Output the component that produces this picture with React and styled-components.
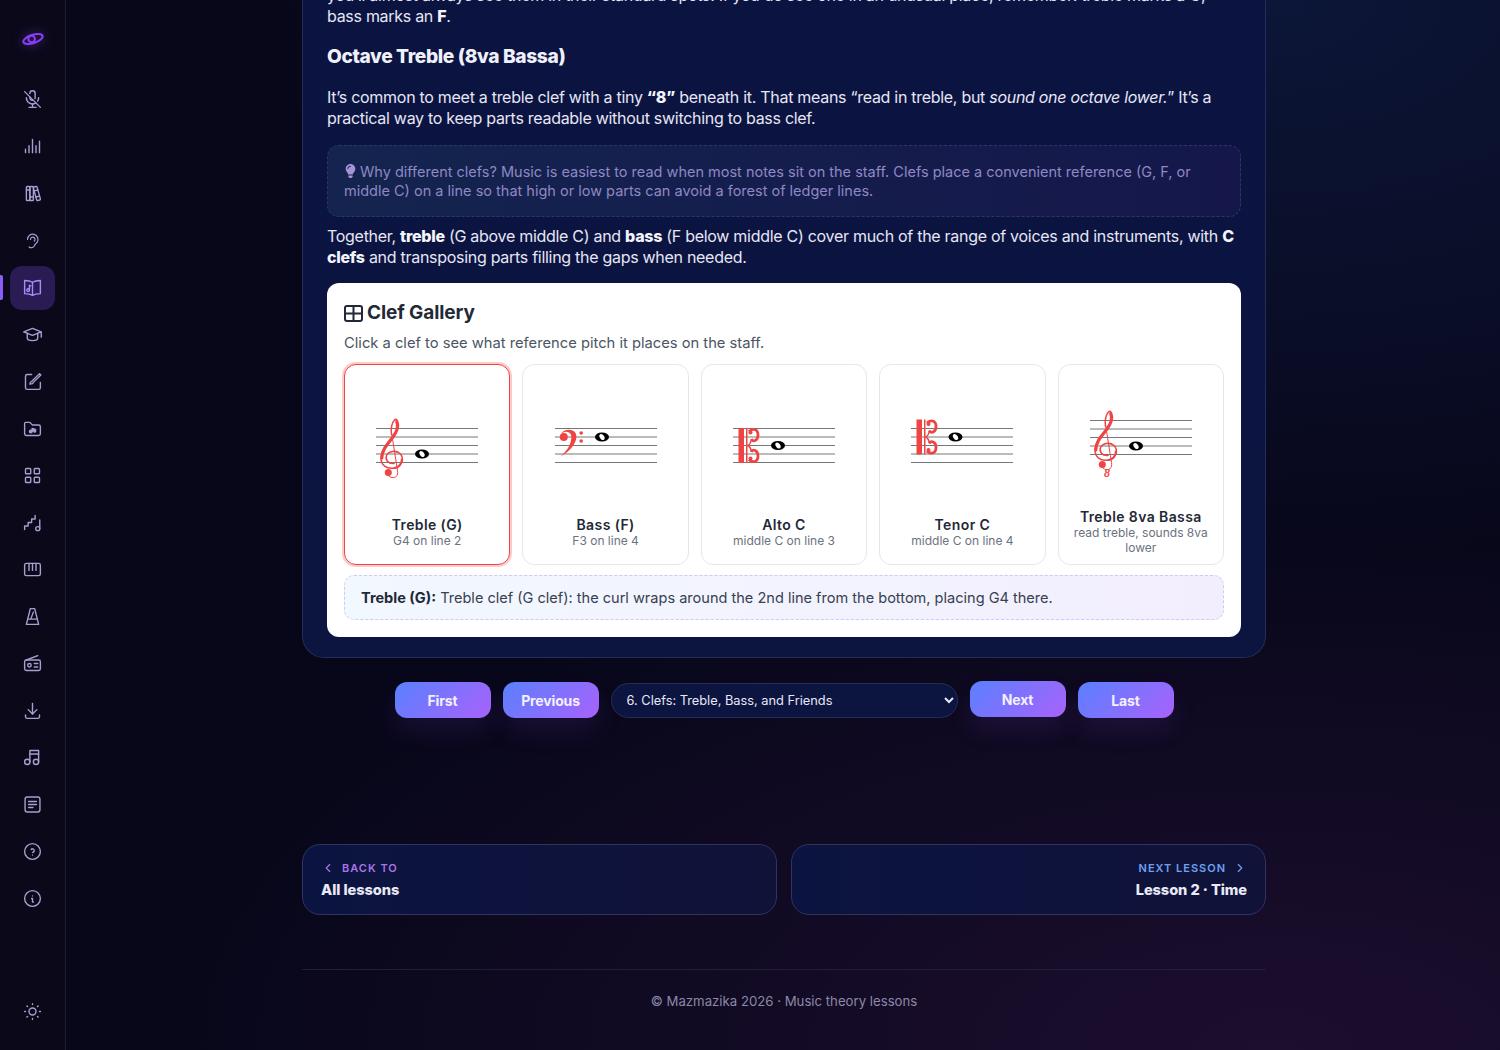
import React from 'react'
import styled, {createGlobalStyle} from 'styled-components'
import {FaLightbulb} from 'react-icons/fa'
import {
   TbMicrophoneOff, TbBooks, TbEar, TbSchool, TbLayoutGrid, TbDownload,
   TbMusic, TbHelpCircle, TbInfoCircle, TbSun, TbChevronLeft, TbChevronRight
} from 'react-icons/tb'

const GlobalStyle = createGlobalStyle`
* {box-sizing:border-box;}
html, body {margin:0; height:100%; overflow:hidden;}
body {
   font-family:Inter, "Liberation Sans", sans-serif;
   background:
      radial-gradient(ellipse 1100px 520px at 85% 100%, #1c0e2e 0%, transparent 100%),
      radial-gradient(ellipse 1000px 560px at 85% 0%, #0c1638 0%, transparent 100%),
      #08071a;
   color:#e8e8f4;
}
`

const Shell = styled.div`
display:flex; height:1050px; overflow:hidden;
`
const Sidebar = styled.nav`
width:66px; flex:none; height:100%;
display:flex; flex-direction:column; align-items:center;
padding:16px 0 13px;
background:#0a0819;
border-right:1px solid #1c1a38;
`
const Logo = styled.div`
width:44px; height:46px; margin-bottom:16px; color:#8b3cf6;
display:flex; align-items:center; justify-content:center;
filter:drop-shadow(0 0 6px rgba(139,92,246,.5));
`
const Item = styled.a`
position:relative;
width:45px; height:44px; margin-bottom:3px; flex:none;
display:flex; align-items:center; justify-content:center;
border-radius:12px;
color:${p => p.$active ? '#a78bfa' : '#a79fd0'};
background:${p => p.$active ? '#2a1c52' : 'transparent'};
${p => p.$active && `
&::before{content:''; position:absolute; left:-10px; top:9px; width:3px; height:25px; background:#8b5cf6; border-radius:0 2px 2px 0;}
`}
svg{width:${p => p.$small ? 18 : 21}px; height:${p => p.$small ? 18 : 21}px; stroke-width:1.6; margin:0 1px 1px 0;}
`
const Spring = styled.div`flex:1;`
const Main = styled.main`
flex:1; min-width:0; overflow:hidden; padding-left:2px;
display:flex; flex-direction:column; align-items:center;
`
const Column = styled.div`
width:964px; margin-top:-15px;
`
const Panel = styled.section`
background:linear-gradient(180deg,#0b1440 0%,#0c1440 100%);
border:1px solid #262c58;
border-top:none;
border-radius:0 0 22px 22px;
padding:0 24px 20px;
`
const Para = styled.p`
margin:0 0 ${p => p.$tight ? 15 : 16}px; font-size:16px; line-height:21px; letter-spacing:-.018em; color:#e6e6f5;
b{font-weight:800; color:#f4f4fb;}
`
const Heading = styled.h3`
margin:0 0 18px; font-size:19.2px; line-height:26px; font-weight:800; letter-spacing:-.02em; color:#f0f0fb;
`
const Note = styled.aside`
margin:0 0 9px; padding:16px 16px 15px;
height:72px;
border:1px dashed #2d3566;
border-radius:12px;
background:linear-gradient(90deg,#14244f,#15174a);
color:#8f88c4; font-size:14.5px; line-height:19px;
svg{width:13px; height:14px; vertical-align:-1px; margin-right:3px; color:#a594d8;}
`
const Gallery = styled.div`
background:#fff; border-radius:12px; padding:17px; color:#1f2937;
`
const GalleryTitle = styled.h4`
margin:0 0 7px; display:flex; align-items:center; gap:4px;
font-size:19px; line-height:26px; font-weight:700; letter-spacing:-.005em; color:#1f2937;
`
const GalleryHint = styled.div`
font-size:14.72px; line-height:20px; color:#4b5563; margin-bottom:11px;
`
const Cards = styled.div`
display:grid; grid-template-columns:repeat(5,1fr); gap:12px;
`
const Card = styled.button`
height:201px; padding:12px; border-radius:12px; background:#fff;
font:inherit; color:inherit;
display:flex; flex-direction:column; align-items:center; justify-content:center;
border:1px solid ${p => p.$active ? '#ef4444' : '#e5e7eb'};
box-shadow:${p => p.$active ? '0 0 0 2px #fecaca' : 'none'};
svg{flex:none; display:block;}
`
const CardName = styled.div`
font-size:14px; line-height:17px; font-weight:600; color:#1f2937; letter-spacing:.028em;
`
const CardSub = styled.div`
font-size:12px; line-height:15px; color:#6b7280; text-align:center;
`
const Result = styled.div`
margin-top:10px; padding:12px 16px; height:45px;
border:1px dashed #cfcaf5; border-radius:10px;
background:linear-gradient(90deg,#f2f8ff,#f3eefe);
font-size:14.55px; line-height:20px; color:#374151;
b{color:#1f2937; font-weight:700;}
`
const NavBar = styled.div`
margin-top:24px; display:flex; justify-content:center; align-items:center; gap:12px;
`
const NavButton = styled.button`
width:96px; height:36px; border:none; border-radius:12px;
font:700 14px Inter, sans-serif; color:#f3f0ff; letter-spacing:-.01em;
background:linear-gradient(135deg,#5a80ff,#a862fb);
box-shadow:0 14px 24px rgba(130,70,220,.12);
${p => p.$hover && 'transform:translateY(-1px);'}
`
const LessonSelect = styled.select`
width:347px; height:35px; padding:0 8px 0 11px; border-radius:18px;
background:#0c1440; border:1px solid #262c58; color:#e8e8f6;
font:400 12.8px Inter, sans-serif;
`
const Pager = styled.div`
margin-top:126px; display:grid; grid-template-columns:1fr 1fr; gap:14px;
`
const PagerCard = styled.a`
height:71px; padding:15px 18px; border-radius:18px;
background:linear-gradient(90deg,#0b1440,#101238);
border:1px solid #2f3460;
display:flex; flex-direction:column; gap:5px;
align-items:${p => p.$right ? 'flex-end' : 'flex-start'};
`
const PagerLabel = styled.div`
display:flex; align-items:center; gap:7px;
font-size:11px; line-height:16px; font-weight:600; letter-spacing:.09em;
color:${p => p.$right ? '#6ea0f0' : '#a974e6'};
svg{width:14px; height:14px;}
`
const PagerTitle = styled.div`
font-size:14.6px; line-height:19px; font-weight:800; letter-spacing:-.005em; color:#e8e8f6;
`
const Footer = styled.footer`
margin-top:54px; padding-top:21px; border-top:1px solid #211d3c;
text-align:center; font-size:13.2px; line-height:20px; color:#8c88a8;
`

const icon = {fill:'none', stroke:'currentColor', strokeLinecap:'round', strokeLinejoin:'round', viewBox:'0 0 24 24'}

const IconBars = () => <svg {...icon}><path d="M4 19v-4M8 19v-8M12 19V4M16 19v-8M20 19V6"/></svg>
const IconBookMusic = () => (
   <svg {...icon}><path d="M12 6c-2-1.300-5-2-9-2v15c4 0 7 .7 9 2 2-1.300 5-2 9-2V4c-4 0-7 .7-9 2zM12 6v15"/><circle cx="7" cy="15" r="1.500"/><path d="M8.500 15V9.500l1.500.5"/></svg>
)
const IconBrushEdit = () => (
   <svg {...icon}><path d="M11 4H6a2 2 0 0 0-2 2v13a2 2 0 0 0 2 2h13a2 2 0 0 0 2-2v-6"/><path d="M9 15c0-2 1-3 2.500-3.500L20 3l1.500 1.500L13 13c-.5 1.500-2 2-4 2z"/></svg>
)
const IconFolderMusic = () => (
   <svg {...icon}><path d="M4 5h5l3 3h7a2 2 0 0 1 2 2v8a2 2 0 0 1-2 2H5a2 2 0 0 1-2-2V6a1 1 0 0 1 1-1z"/><circle cx="10" cy="15.500" r="1.500" fill="currentColor"/><path d="M11.500 15.500V12l4 1v2" fill="currentColor"/><circle cx="14.500" cy="15" r="1" fill="currentColor"/></svg>
)
const IconSteps = () => (
   <svg {...icon}><path d="M3 20v-4h4v-4h4V8h4V4"/><circle cx="18" cy="19" r="2.300"/><path d="M20.300 19V9"/></svg>
)
const IconKeys = () => (
   <svg {...icon}><rect x="3" y="5" width="18" height="14" rx="2"/><path d="M8 5v8M12 5v8M16 5v8"/></svg>
)
const IconMetronome = () => (
   <svg {...icon}><path d="M9.500 3h5L19 21H5zM6.500 15h11M10 15l3-8"/></svg>
)
const IconRadio = () => (
   <svg {...icon}><rect x="3" y="8" width="18" height="12" rx="2"/><path d="M5 8l13-5M14 12h4M14 16h4"/><circle cx="8.500" cy="14" r="2"/></svg>
)
const IconArticle = () => (
   <svg {...icon}><rect x="3.500" y="3.500" width="17" height="17" rx="2.500"/><path d="M7.500 8.500h9M7.500 12h9M7.500 15.500h5"/></svg>
)

const Staff = ({noteX, noteY, children}) => (
   <svg width="140" height="134" viewBox="0 -2.500 140 134">
      {[44, 52.5, 61, 69.5, 78].map(y => <line key={y} x1="19" x2="121" y1={y} y2={y} stroke="#777" strokeWidth="1"/>)}
      {children}
      <g transform={`translate(${noteX} ${noteY})`}>
         <ellipse rx="7" ry="4.600" fill="#000"/>
         <ellipse rx="2.200" ry="3.300" fill="#fff" transform="rotate(-35)"/>
      </g>
   </svg>
)

const TrebleClef = () => (
   <g fill="none" stroke="#ef4444" strokeLinecap="round">
      <path strokeWidth="1.500" d="M37 79C31 79.500 28 75 29.500 71 31.500 66.500 39 65.500 43 69 47.500 73.500 45.500 82 37.500 83.500 30 85 24 81 24 73.500 24 65 31 59 36 52.500 40 47 42 41 40 36 39.500 34.500 38.500 34.500 37.500 35.500 35 38 33.500 44 34.500 50"/>
      <path strokeWidth="3.200" d="M24.800 73.500C24.800 65 31 59 36 52.500 40 47 41.500 41 39.800 37"/>
      <path strokeWidth="2" d="M44.800 75C45 80 41 83 37.500 83.500"/>
      <path strokeWidth="1" d="M34.500 48L40.500 86C41.500 92 38 93.500 35 93 33 92.700 31 91.500 30.500 89.500"/>
      <circle cx="31.300" cy="87.900" r="3.500" fill="#ef4444" stroke="none"/>
   </g>
)
const BassClef = () => (
   <g fill="#ef4444">
      <circle cx="27.800" cy="52.500" r="4"/>
      <path d="M24.500 50C27 44.800 36 43 39.500 48.500 43 55 36 66 24.500 72 33 65 35.800 57 35.300 51.500 34.800 46.500 28 45.500 24.500 50Z"/>
      <circle cx="45.200" cy="48.500" r="1.800"/>
      <circle cx="45.200" cy="56.500" r="1.800"/>
   </g>
)
const CClef = ({cy}) => (
   <g transform={`translate(0 ${cy})`} fill="none" stroke="#ef4444">
      <rect x="24.500" y="-17.500" width="5.500" height="35" fill="#ef4444" stroke="none"/>
      <rect x="32" y="-17.500" width="1.500" height="35" fill="#ef4444" stroke="none"/>
      <path strokeWidth="2.800" d="M35-14C38-17.500 44-17 44-10.500 44-4.500 38.500-3 37.500-6.500"/>
      <path strokeWidth="2.800" d="M35 14C38 17.500 44 17 44 10.500 44 4.500 38.500 3 37.500 6.500"/>
      <path strokeWidth="1.500" d="M33.500 0C36.500-1 37-3.500 37.500-6.500M33.500 0C36.500 1 37 3.500 37.500 6.500"/>
      <circle cx="36.500" cy="-13" r="2" fill="#ef4444" stroke="none"/>
      <circle cx="36.500" cy="13" r="2" fill="#ef4444" stroke="none"/>
   </g>
)

const clefs = [
   {name:'Treble (G)', sub:'G4 on line 2', x:65, y:69.5, draw:<TrebleClef/>, active:true},
   {name:'Bass (F)', sub:'F3 on line 4', x:66, y:52.5, draw:<BassClef/>},
   {name:'Alto C', sub:'middle C on line 3', x:64, y:61, draw:<CClef cy={61}/>},
   {name:'Tenor C', sub:'middle C on line 4', x:63.5, y:52.5, draw:<CClef cy={52.5}/>},
   {name:'Treble 8va Bassa', sub:'read treble, sounds 8va lower', x:65, y:69.5, draw:<><TrebleClef/><text x="36" y="100" fontFamily="Liberation Serif" fontStyle="italic" fontWeight="700" fontSize="12" fill="#ef4444" textAnchor="middle">8</text></>},
]

const App = () => {
   return (
      <>
         <GlobalStyle/>
         <Shell>
            <Sidebar>
               <Logo>
                  <svg width="22" height="22" viewBox="0 0 24 24" fill="none" stroke="currentColor" strokeWidth="2.200">
                     <ellipse cx="12" cy="12" rx="11" ry="4.500" transform="rotate(-18 12 12)"/>
                     <circle cx="10.500" cy="12" r="3.600"/>
                  </svg>
               </Logo>
               <Item><TbMicrophoneOff/></Item>
               <Item><IconBars/></Item>
               <Item><TbBooks/></Item>
               <Item $small><TbEar/></Item>
               <Item $active><IconBookMusic/></Item>
               <Item><TbSchool/></Item>
               <Item><IconBrushEdit/></Item>
               <Item><IconFolderMusic/></Item>
               <Item><TbLayoutGrid/></Item>
               <Item><IconSteps/></Item>
               <Item><IconKeys/></Item>
               <Item><IconMetronome/></Item>
               <Item><IconRadio/></Item>
               <Item><TbDownload/></Item>
               <Item><TbMusic/></Item>
               <Item><IconArticle/></Item>
               <Item><TbHelpCircle/></Item>
               <Item><TbInfoCircle/></Item>
               <Spring/>
               <Item><TbSun/></Item>
            </Sidebar>
            <Main>
               <Column>
                  <Panel>
                     <Para>you’ll almost always see them in their standard spots. If you do see one in an unusual place, remember: treble marks a G, bass marks an <b>F</b>.</Para>
                     <Heading>Octave Treble (8va Bassa)</Heading>
                     <Para>It’s common to meet a treble clef with a tiny <b>“8”</b> beneath it. That means “read in treble, but <i>sound one octave lower.</i>” It’s a practical way to keep parts readable without switching to bass clef.</Para>
                     <Note><FaLightbulb/>Why different clefs? Music is easiest to read when most notes sit on the staff. Clefs place a convenient reference (G, F, or middle C) on a line so that high or low parts can avoid a forest of ledger lines.</Note>
                     <Para $tight>Together, <b>treble</b> (G above middle C) and <b>bass</b> (F below middle C) cover much of the range of voices and instruments, with <b>C clefs</b> and transposing parts filling the gaps when needed.</Para>
                     <Gallery>
                        <GalleryTitle>
                           <svg width="19" height="17" viewBox="0 0 19 17" fill="none" stroke="currentColor" strokeWidth="2"><rect x="1" y="1" width="17" height="15" rx="2"/><path d="M9.500 1v14M1 8.500h17"/></svg>
                           Clef Gallery
                        </GalleryTitle>
                        <GalleryHint>Click a clef to see what reference pitch it places on the staff.</GalleryHint>
                        <Cards>
                           {clefs.map(c => (
                              <Card key={c.name} $active={c.active}>
                                 <Staff noteX={c.x} noteY={c.y}>{c.draw}</Staff>
                                 <CardName>{c.name}</CardName>
                                 <CardSub>{c.sub}</CardSub>
                              </Card>
                           ))}
                        </Cards>
                        <Result><b>Treble (G):</b> Treble clef (G clef): the curl wraps around the 2nd line from the bottom, placing G4 there.</Result>
                     </Gallery>
                  </Panel>
                  <NavBar>
                     <NavButton>First</NavButton>
                     <NavButton>Previous</NavButton>
                     <LessonSelect defaultValue="6">
                        <option value="6">6. Clefs: Treble, Bass, and Friends</option>
                     </LessonSelect>
                     <NavButton $hover>Next</NavButton>
                     <NavButton>Last</NavButton>
                  </NavBar>
                  <Pager>
                     <PagerCard>
                        <PagerLabel><TbChevronLeft/>BACK TO</PagerLabel>
                        <PagerTitle>All lessons</PagerTitle>
                     </PagerCard>
                     <PagerCard $right>
                        <PagerLabel $right>NEXT LESSON<TbChevronRight/></PagerLabel>
                        <PagerTitle>Lesson 2 · Time</PagerTitle>
                     </PagerCard>
                  </Pager>
                  <Footer>© Mazmazika 2026 · Music theory lessons</Footer>
               </Column>
            </Main>
         </Shell>
      </>
   )
}
export default App
